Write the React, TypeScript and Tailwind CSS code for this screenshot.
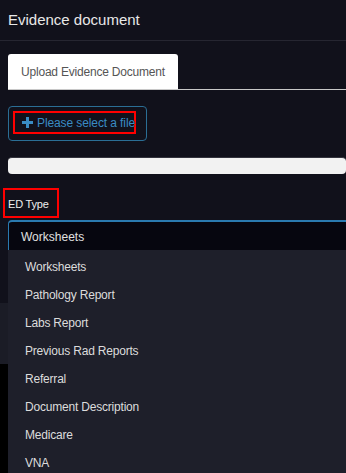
import React from "react";

const items = [
  "Worksheets",
  "Pathology Report",
  "Labs Report",
  "Previous Rad Reports",
  "Referral",
  "Document Description",
  "Medicare",
  "VNA",
];

export default function App() {
  return (
    <div
      className="relative w-[346px] h-[473px] overflow-hidden bg-[#11111b] font-['Liberation_Sans',Arial,sans-serif]"
    >
      <div className="h-[41px] px-2 flex items-center border-b border-[#262631] text-[15px] text-[#e8e8e8]">
        Evidence document
      </div>
      <div className="pl-2 pt-[13px]">
        <div className="flex items-end border-b border-[#c8c8c8]">
          <div className="w-[170px] h-[35px] bg-white rounded-t-[3px] flex items-center pl-[13px] text-[12px] tracking-[-0.2px] text-[#555] whitespace-nowrap">
            Upload Evidence Document
          </div>
        </div>
        <div className="mt-[16px] w-[139px] h-[35px] border border-[#2b6e95] rounded-[4px] p-[4px]">
          <div className="w-[123px] h-[23px] border-2 border-[#ff0000] flex items-center pl-[7px] gap-[4px] text-[12px] tracking-[-0.1px] text-[#3a8cc4] whitespace-nowrap">
            <svg width="11" height="11" viewBox="0 0 11 11" className="shrink-0">
              <rect x="4" y="0" width="3" height="11" fill="#3a8cc4" />
              <rect x="0" y="4" width="11" height="3" fill="#3a8cc4" />
            </svg>
            <span>Please select a file</span>
          </div>
        </div>
        <div className="mt-[16px] h-[17px] bg-[#f2f2f2] rounded-[4px] border-t border-[#34343e]"></div>
        <div className="mt-[14px] -ml-[5px] w-[56px] h-[30px] border-2 border-[#ff0000] flex items-end pl-[3px] pb-[4px] text-[11px] tracking-[-0.2px] text-[#eeeeee] whitespace-nowrap">
          ED Type
        </div>
        <div className="mt-[2px] h-[31px] bg-[#06060f] border-t-2 border-l border-[#2a7ab0] rounded-tl-[4px] flex items-center pl-[12px] text-[12px] text-[#e0e0e0]">
          Worksheets
        </div>
      </div>
      <div className="mt-[52px] h-[61px] bg-[#1b1c26]"></div>
      <div className="h-[200px] bg-black"></div>
      <div className="absolute left-2 right-0 top-[250px] bottom-0 bg-[#1e1f2a] pt-[3px]">
        {items.map((it) => (
          <div key={it} className="h-[28px] flex items-center pl-[17px] text-[12px] tracking-[-0.2px] text-[#dcdcdc] whitespace-nowrap">
            {it}
          </div>
        ))}
      </div>
    </div>
  );
}
